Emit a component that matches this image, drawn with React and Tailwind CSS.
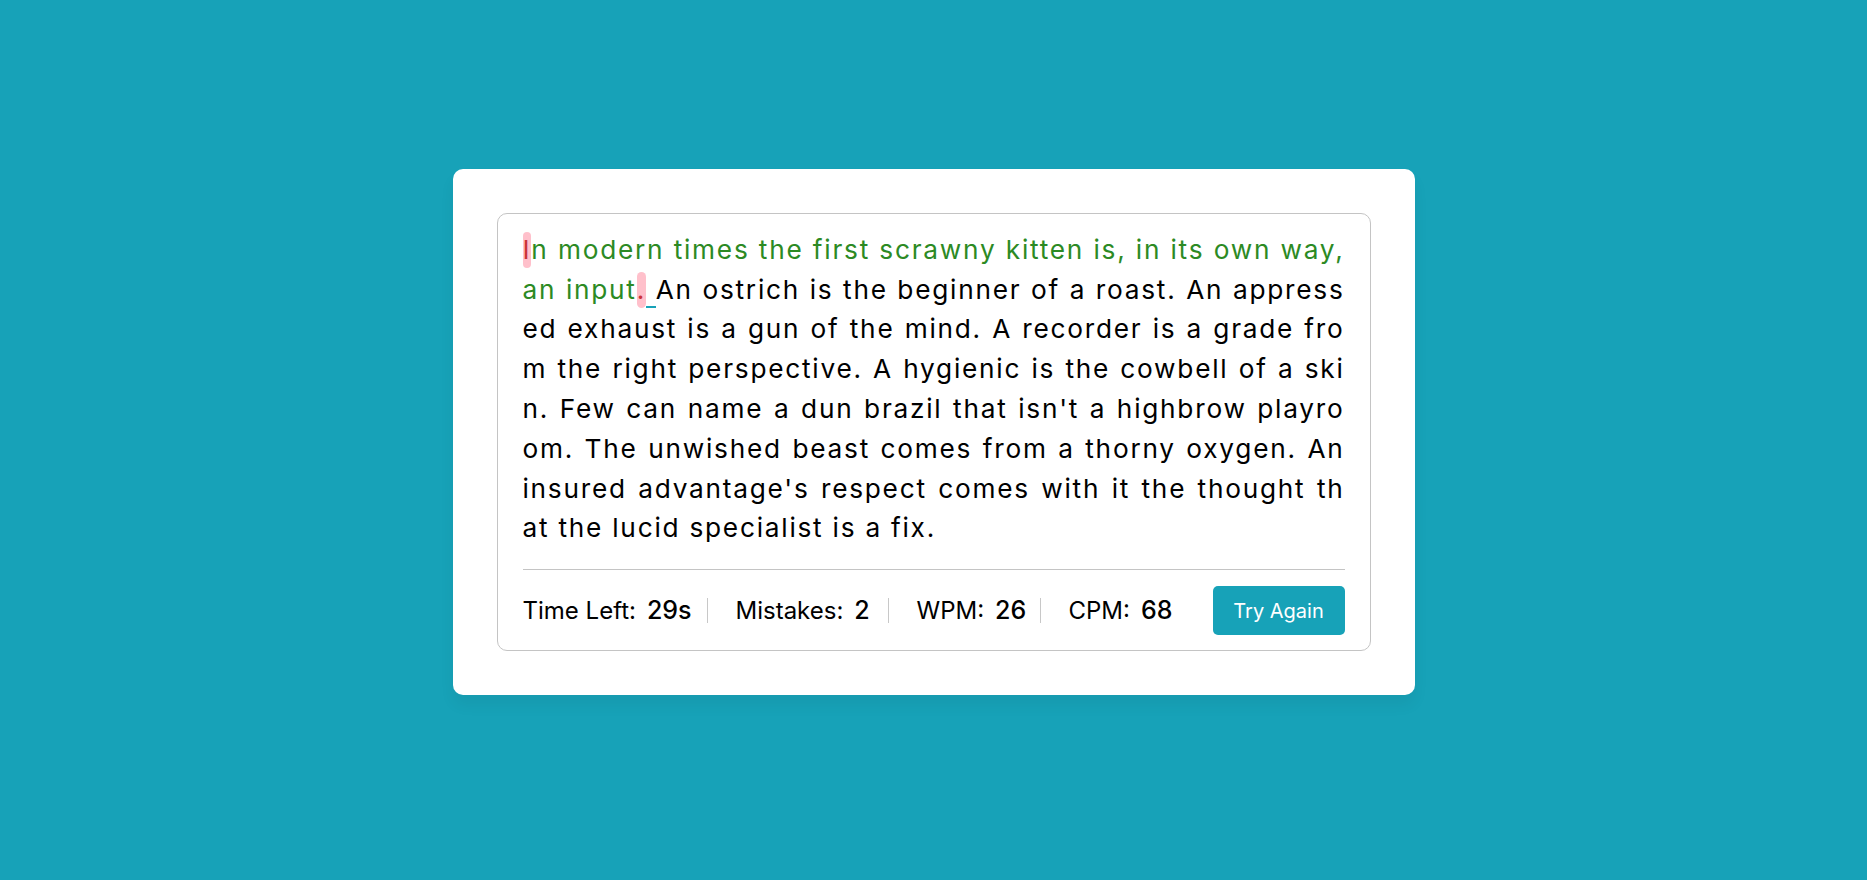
import React from "react";

const G = "text-[#2c8a24]";
const Bad = ({ children }) => (
  <span className="rounded-[5px] bg-[#ffc0cb] pt-[2px] pb-[3px] text-[#cb3439]">{children}</span>
);

const lines = [
  "ed exhaust is a gun of the mind. A recorder is a grade fro",
  "m the right perspective. A hygienic is the cowbell of a ski",
  "n. Few can name a dun brazil that isn't a highbrow playro",
  "om. The unwished beast comes from a thorny oxygen. An",
  "insured advantage's respect comes with it the thought th",
];

const J = "[text-align-last:justify] text-justify whitespace-nowrap";

function Stat({ label, value, className }) {
  return (
    <div className={"flex h-[25px] items-center " + className}>
      <span className="text-[24px] text-black">{label}</span>
      <span className="ml-[11px] text-[25px] font-medium text-black">{value}</span>
    </div>
  );
}

export default function App() {
  return (
    <div className="flex h-[880px] w-full items-center justify-center bg-[#17a2b8] pb-4 [font-family:Inter,'Open_Sans',sans-serif]">
      <div className="w-[962px] rounded-[10px] bg-white p-[44px] shadow-[0_10px_15px_rgba(0,0,0,0.05)]">
        <div className="rounded-[10px] border border-[#c4c4c4] px-[25px] pt-[16px]">
          <div className="text-[26.25px] leading-[39.8px] tracking-[1.75px] text-black">
            <div className={J}>
              <Bad>I</Bad>
              <span className={G}>n modern times the first scrawny kitten is, in its own way,</span>
            </div>
            <div className={J}>
              <span className={G}>an input</span>
              <Bad>.</Bad>
              <span className="border-b-2 border-[#17a2b8] pb-[1px]"> </span>
              An ostrich is the beginner of a roast. An appress
            </div>
            {lines.map((l) => (
              <div key={l} className={J}>
                {l}
              </div>
            ))}
            <div>at the lucid specialist is a fix.</div>
          </div>
          <div className="mt-[21px] flex items-center justify-between border-t border-[#c4c4c4] pt-[16px] pb-[15px]">
            <div className="flex items-center">
              <Stat label="Time Left:" value="29s" className="w-[184px]" />
              <Stat label="Mistakes:" value="2" className="w-[181px] border-l border-[#c8c8c8] pl-[28px]" />
              <Stat label="WPM:" value="26" className="w-[152px] border-l border-[#c8c8c8] pl-[28px]" />
              <Stat label="CPM:" value="68" className="border-l border-[#c8c8c8] pl-[28px]" />
            </div>
            <button className="flex h-[49px] w-[132px] items-center justify-center rounded-[5px] bg-[#17a2b8] text-[20px] text-white">
              Try Again
            </button>
          </div>
        </div>
      </div>
    </div>
  );
}
